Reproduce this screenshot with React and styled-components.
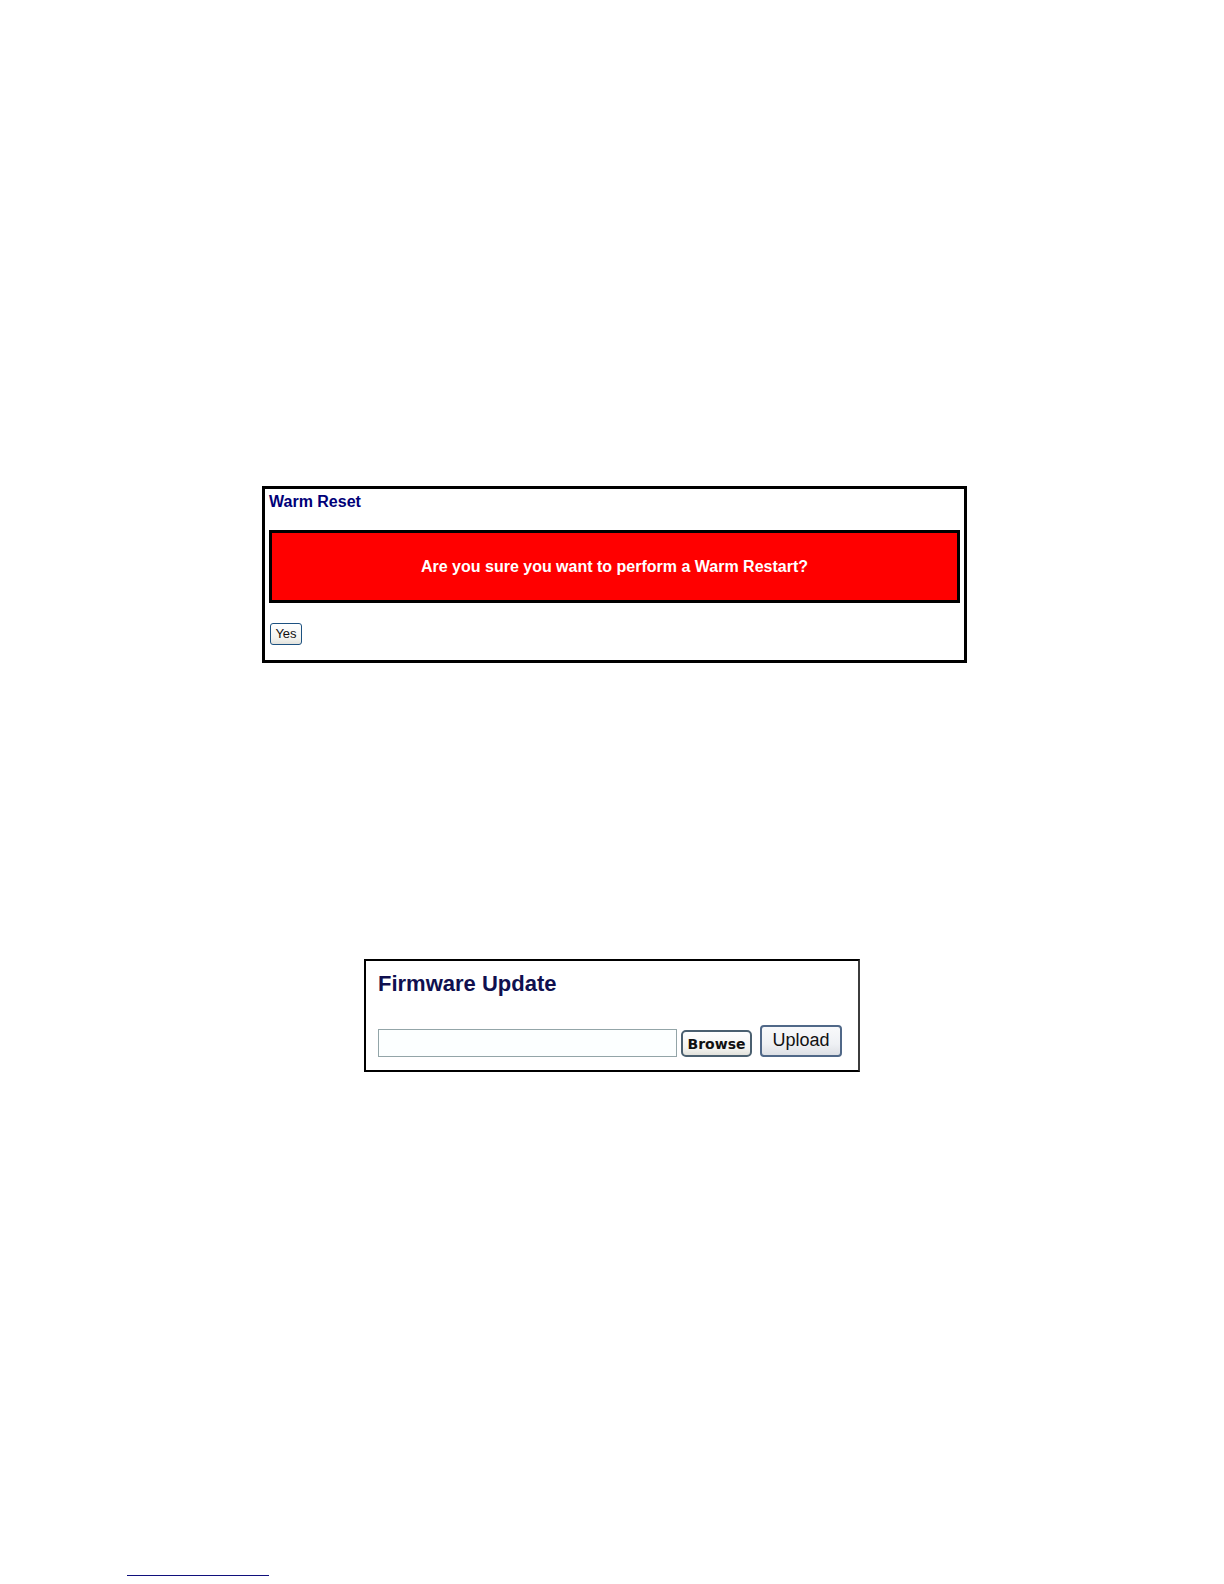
import React, { useState } from "react";
import styled, { createGlobalStyle } from "styled-components";

export default function App() {
  const [fileName, setFileName] = useState("");

  return (
    <>
      <GlobalStyle />
      <Page>
        <ResetPanel>
          <Title>Warm Reset</Title>
          <Warning>Are you sure you want to perform a Warm Restart?</Warning>
          <YesButton type="button">Yes</YesButton>
        </ResetPanel>
        <UpdatePanel onSubmit={(event) => event.preventDefault()}>
          <Title $large id="firmware-title">Firmware Update</Title>
          <FileRow>
            <FileInput
              type="text"
              aria-labelledby="firmware-title"
              value={fileName}
              onChange={(event) => setFileName(event.target.value)}
            />
            <BrowseButton type="button">Browse</BrowseButton>
            <UploadButton type="submit">Upload</UploadButton>
          </FileRow>
        </UpdatePanel>
        <FootRule />
      </Page>
    </>
  );
}

const GlobalStyle = createGlobalStyle`
  * {
    box-sizing: border-box;
  }
  body {
    margin: 0;
    background-color: #ffffff;
    font-family: "Liberation Sans", Arial, sans-serif;
  }
`;

const Page = styled.main`
  display: flex;
  flex-direction: column;
  align-items: center;
  min-height: 100vh;
  padding: 486px 127px 8px;
`;

const ResetPanel = styled.section`
  width: 100%;
  max-width: 705px;
  margin-left: 5px;
  padding: 5px 4px 15px;
  border: 3px solid #000000;
`;

const Title = styled.h1`
  margin: 0;
  color: ${({ $large }) => ($large ? "#10104f" : "#000078")};
  font-size: ${({ $large }) => ($large ? "22px" : "16px")};
  line-height: ${({ $large }) => ($large ? "24px" : "16px")};
`;

const Warning = styled.p`
  margin: 20px 0;
  padding: 25px 8px 24px;
  border: 3px solid #000000;
  background-color: #ff0000;
  color: #ffffff;
  font-size: 16px;
  font-weight: bold;
  line-height: 18px;
  text-align: center;
`;

const Button = styled.button`
  padding: 0;
  border: 1px solid #1c5180;
  border-radius: 3px;
  background: linear-gradient(#ffffff, #f4f4f0 70%, #e2e2dc);
  color: #111111;
  font-family: inherit;
`;

const YesButton = styled(Button)`
  display: block;
  width: 32px;
  height: 22px;
  margin-left: 1px;
  font-size: 13px;
  line-height: 18px;
`;

const UpdatePanel = styled.form`
  width: 100%;
  max-width: 496px;
  margin-top: 296px;
  padding: 11px 16px 13px 12px;
  border: 2px solid #000000;
  border-right-color: #3c3c3c;
`;

const FileRow = styled.div`
  display: flex;
  align-items: flex-end;
  margin-top: 29px;
`;

const FileInput = styled.input`
  flex: 1;
  min-width: 0;
  height: 28px;
  margin: 0;
  padding: 2px 4px;
  border: 1px solid #93a5a8;
  background-color: #fcffff;
  font-family: inherit;
  font-size: 16px;
`;

const BrowseButton = styled(Button)`
  width: 71px;
  height: 27px;
  margin: 0 8px 0 4px;
  border: 2px solid #4b6070;
  border-radius: 5px;
  font-family: "DejaVu Sans", Verdana, sans-serif;
  font-size: 14px;
  font-weight: bold;
  line-height: 20px;
`;

const UploadButton = styled(Button)`
  width: 82px;
  height: 32px;
  padding-bottom: 2px;
  border: 2px solid #506888;
  border-radius: 4px;
  background: linear-gradient(#f8f9fb, #eff1f4 60%, #dde0e5);
  font-size: 18px;
  line-height: 24px;
`;

const FootRule = styled.hr`
  align-self: flex-start;
  width: 142px;
  margin: auto 0 0;
  border: 0;
  border-top: 1px solid #10107c;
`;
